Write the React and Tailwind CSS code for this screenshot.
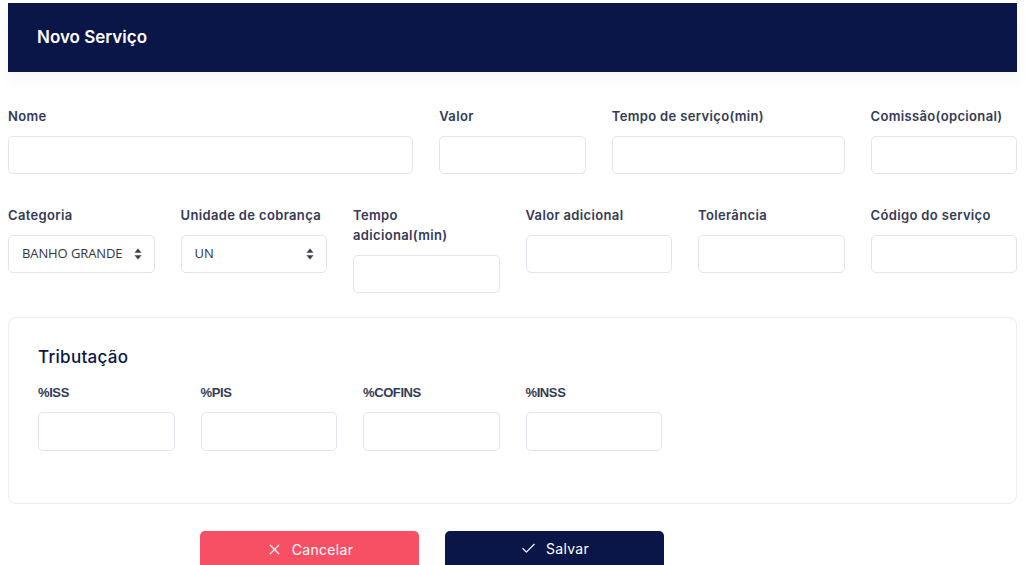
import { X, Check } from "lucide-react";

const SortIcon = () => (
    <svg width="8" height="12" viewBox="0 0 8 12" className="shrink-0">
        <path d="M4 0.5 L7.5 4.8 H0.5 Z" fill="#3b3f55" />
        <path d="M4 11.5 L7.5 7.2 H0.5 Z" fill="#3b3f55" />
    </svg>
);

const Field = ({ label, span, select, value }) => (
    <div className={`${span} flex flex-col`}>
        <label className="text-[13px] font-semibold text-[#343a55] leading-5 mb-[10px] tracking-[0.35px]">
            {label}
        </label>
        {select ? (
            <div className="h-[38px] rounded-[5px] border border-[#e3e3ef] bg-white flex items-center justify-between pl-[13px] pr-[12px]">
                <span className="text-[13px] text-[#333645] font-['Open_Sans',sans-serif] tracking-[-0.1px]">
                    {value}
                </span>
                <SortIcon />
            </div>
        ) : (
            <input className="h-[38px] rounded-[5px] border border-[#e3e3ef] bg-white outline-none px-3" />
        )}
    </div>
);

const TaxField = ({ label }) => (
    <div className="col-span-2 flex flex-col">
        <label className="text-[13px] font-bold text-[#343a55] leading-5 mb-[9px] font-['Liberation_Sans',sans-serif] tracking-[-0.4px]">
            {label}
        </label>
        <input className="h-[39px] rounded-[5px] border border-[#e3e3ef] bg-white outline-none px-3" />
    </div>
);

export default function App() {
    return (
        <div className="w-[1025px] h-[565px] overflow-hidden bg-white font-['Inter',sans-serif]">
            <div className="pt-[3px] px-2">
                <div className="h-[69px] bg-[#0a1548] flex items-center pl-[29px] shadow-[0_8px_14px_rgba(0,0,0,0.04)]">
                    <h1 className="text-white text-[17px] font-semibold">
                        Novo Serviço
                    </h1>
                </div>

                <div className="grid grid-cols-12 gap-x-[26px] mt-[34px]">
                    <Field label="Nome" span="col-span-5" />
                    <Field label="Valor" span="col-span-2" />
                    <Field label="Tempo de serviço(min)" span="col-span-3" />
                    <Field label="Comissão(opcional)" span="col-span-2" />
                </div>

                <div className="grid grid-cols-12 gap-x-[26px] mt-[31px] items-start">
                    <Field
                        label="Categoria"
                        span="col-span-2"
                        select
                        value="BANHO GRANDE"
                    />
                    <Field
                        label="Unidade de cobrança"
                        span="col-span-2"
                        select
                        value="UN"
                    />
                    <Field
                        label={
                            <>
                                Tempo
                                <br />
                                adicional(min)
                            </>
                        }
                        span="col-span-2"
                    />
                    <Field label="Valor adicional" span="col-span-2" />
                    <Field label="Tolerância" span="col-span-2" />
                    <Field label="Código do serviço" span="col-span-2" />
                </div>

                <div className="mt-[24px] border border-[#ececf3] rounded-[8px] px-[29px] pt-[27px] h-[187px]">
                    <h2 className="text-[17px] font-medium text-[#0a1548] mb-[12px] tracking-[0.3px]">
                        Tributação
                    </h2>
                    <div className="grid grid-cols-12 gap-x-[26px]">
                        <TaxField label="%ISS" />
                        <TaxField label="%PIS" />
                        <TaxField label="%COFINS" />
                        <TaxField label="%INSS" />
                    </div>
                </div>

                <div className="flex gap-[26px] mt-[27px] pl-[192px]">
                    <button className="w-[219px] h-[40px] rounded-[5px] bg-[#f74f64] text-white text-[14px] tracking-[0.3px] flex items-center justify-center gap-[9px] pb-[4px]">
                        <X size={17} strokeWidth={1.6} />
                        Cancelar
                    </button>
                    <button className="w-[219px] h-[40px] rounded-[5px] bg-[#0a1548] text-white text-[14px] tracking-[0.3px] flex items-center justify-center gap-[9px] pb-[6px]">
                        <Check size={17} strokeWidth={1.6} />
                        Salvar
                    </button>
                </div>
            </div>
        </div>
    );
}
